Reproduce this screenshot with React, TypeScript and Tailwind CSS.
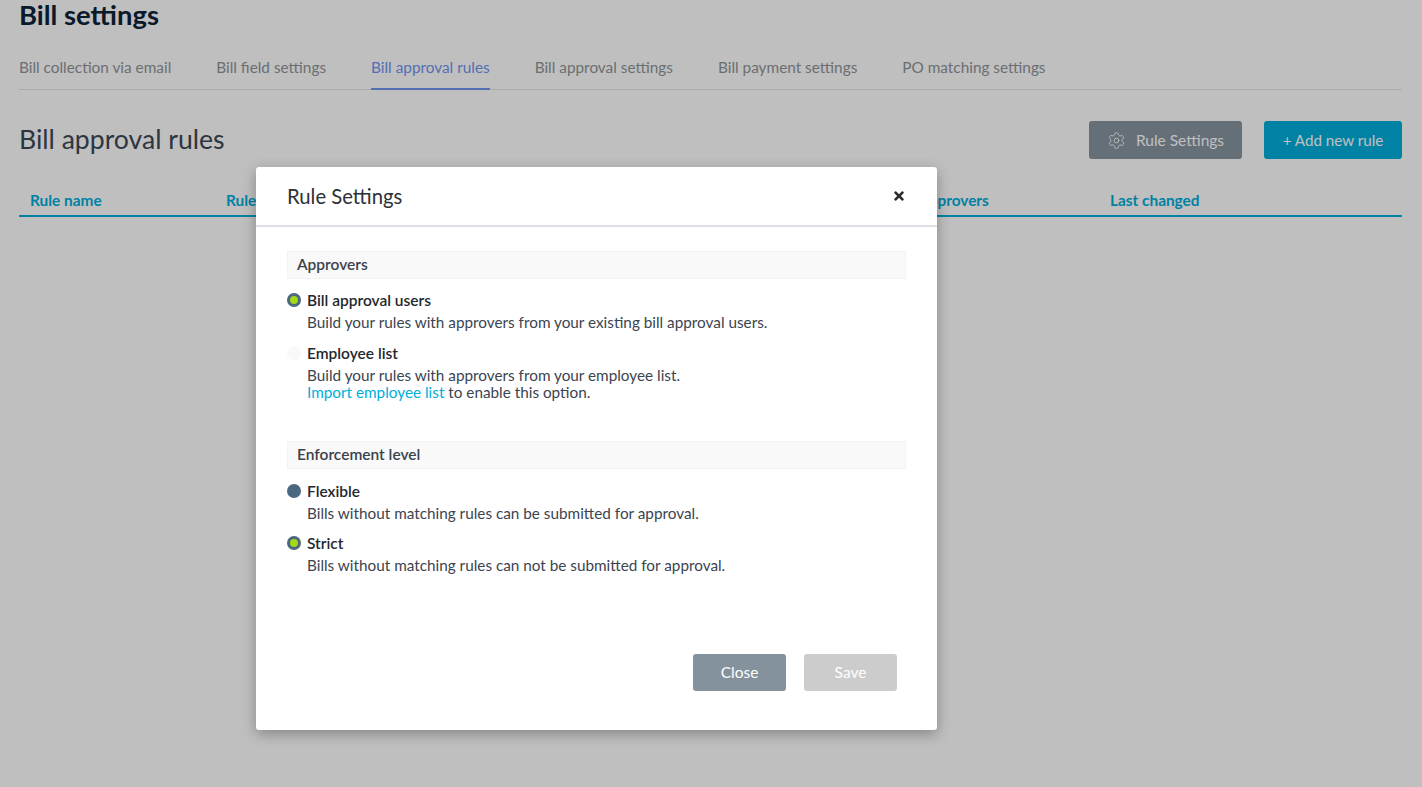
import { Settings } from "lucide-react";
import { FaTimes } from "react-icons/fa";

const TABS = [
  "Bill collection via email",
  "Bill field settings",
  "Bill approval rules",
  "Bill approval settings",
  "Bill payment settings",
  "PO matching settings",
];

function Radio({ state }: { state: "on" | "off" | "disabled" }) {
  if (state === "disabled") {
    return <span className="mt-[3px] h-[14px] w-[14px] shrink-0 rounded-full bg-[#f9f9f9]" />;
  }
  return (
    <span className="mt-[3px] flex h-[14px] w-[14px] shrink-0 items-center justify-center rounded-full bg-[#4a6880]">
      {state === "on" && <span className="h-[8px] w-[8px] rounded-full bg-[#a5d815]" />}
    </span>
  );
}

function Option({
  state,
  title,
  children,
}: {
  state: "on" | "off" | "disabled";
  title: string;
  children: React.ReactNode;
}) {
  return (
    <div className="flex gap-[6px]">
      <Radio state={state} />
      <div>
        <div className="text-[15.5px] leading-[20px] font-semibold text-[#23282e]">{title}</div>
        <div className="mt-[4px] text-[15.3px] leading-[17px] text-[#3b4450]">{children}</div>
      </div>
    </div>
  );
}

function SectionHead({ label }: { label: string }) {
  return (
    <div className="h-[28px] border border-[#f3f3f3] bg-[#f9f9f9] pl-[9px] text-[15.5px] leading-[25px] font-semibold text-[#3a424c]">
      {label}
    </div>
  );
}

export default function App() {
  return (
    <div className="relative h-[787px] overflow-hidden bg-white font-['Lato',sans-serif]">
      <div className="px-[19px] pr-[20px]">
        <h1 className="text-[27.4px] leading-[30px] font-bold text-[#0d2338]">Bill settings</h1>

        <div className="mt-[21px] flex h-[39px] gap-[45px] border-b border-[#e6e6e6]">
          {TABS.map((t) => (
            <div
              key={t}
              className={
                t === "Bill approval rules"
                  ? "h-[39px] border-b-2 border-[#7094f0] pt-[5px] text-[15.35px] leading-[22px] text-[#7094f0]"
                  : "pt-[5px] text-[15.35px] leading-[22px] text-[#8f9499]"
              }
            >
              {t}
            </div>
          ))}
        </div>

        <div className="mt-[31px] flex h-[38px] items-center justify-between">
          <h2 className="mb-[2px] text-[26.6px] leading-[38px] text-[#3d4856]">Bill approval rules</h2>
          <div className="flex gap-[22px]">
            <button className="flex h-[38px] w-[153px] items-center justify-center gap-[10px] rounded-[3px] bg-[#87949f] text-[15.5px] text-white">
              <Settings size={19} strokeWidth={1.1} />
              <span className="pt-[1px]">Rule Settings</span>
            </button>
            <button className="h-[38px] w-[138px] rounded-[3px] bg-[#00aedb] text-[15.2px] text-white">
              + Add new rule
            </button>
          </div>
        </div>

        <div className="mt-[22px] flex h-[36px] items-center border-b-2 border-[#00aedb] pt-[6px] pl-[11px] text-[15.4px] font-bold text-[#00aedb]">
          <div className="w-[196px]">Rule name</div>
          <div className="w-[692px]">Rule type</div>
          <div className="w-[192px]">Approvers</div>
          <div>Last changed</div>
        </div>
      </div>

      <div className="absolute inset-0 bg-black/25" />

      <div className="absolute top-[167px] left-[256px] h-[563px] w-[681px] rounded-[3px] bg-white shadow-[0_4px_14px_rgba(0,0,0,0.3)]">
        <div className="flex h-[60px] items-center justify-between border-b-2 border-[#dfdfe8] pr-[31px] pl-[31px]">
          <div className="text-[20.3px] text-[#2d3136]">Rule Settings</div>
          <FaTimes size={14} className="text-[#2a2a2a]" />
        </div>

        <div className="pt-[24px] pr-[31px] pl-[31px]">
          <SectionHead label="Approvers" />
          <div className="mt-[11px] flex flex-col gap-[12px]">
            <Option state="on" title="Bill approval users">
              Build your rules with approvers from your existing bill approval users.
            </Option>
            <Option state="disabled" title="Employee list">
              Build your rules with approvers from your employee list.
              <br />
              <span className="text-[#00aedb]">Import employee list</span> to enable this option.
            </Option>
          </div>

          <div className="mt-[40px]">
            <SectionHead label="Enforcement level" />
          </div>
          <div className="mt-[12px] flex flex-col gap-[11px]">
            <Option state="off" title="Flexible">
              Bills without matching rules can be submitted for approval.
            </Option>
            <Option state="on" title="Strict">
              Bills without matching rules can not be submitted for approval.
            </Option>
          </div>

          <div className="mt-[80px] flex justify-end gap-[18px] pr-[9px]">
            <button className="h-[37px] w-[93px] rounded-[3px] bg-[#84929d] pt-[1px] text-[15.5px] text-white">Close</button>
            <button className="h-[37px] w-[93px] rounded-[3px] bg-[#cccccc] pt-[1px] text-[15.5px] text-white">Save</button>
          </div>
        </div>
      </div>
    </div>
  );
}
